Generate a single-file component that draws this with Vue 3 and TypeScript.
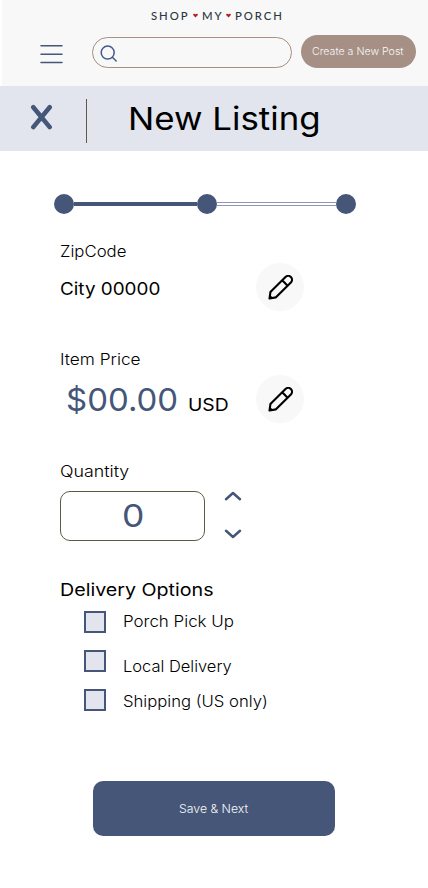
<script setup lang="ts">
import { ref } from 'vue'

interface DeliveryOption {
  id: string
  label: string
  checked: boolean
}

const quantity = ref(0)
const options = ref<DeliveryOption[]>([
  { id: 'porch', label: 'Porch Pick Up', checked: false },
  { id: 'local', label: 'Local Delivery', checked: false },
  { id: 'shipping', label: 'Shipping (US only)', checked: false },
])

function step(delta: number) {
  quantity.value = Math.max(0, quantity.value + delta)
}
</script>

<template>
  <div class="page">
    <header class="top">
      <div class="logo">
        <span class="w-shop">SHOP</span>
        <svg class="heart" viewBox="0 0 6 5"><path d="M3 4.8 L.4 2.2 C-.5 .8 1.3 -.6 3 .9 C4.7 -.6 6.5 .8 5.6 2.2Z" fill="#b3202a" /></svg>
        <span class="w-my">MY</span>
        <svg class="heart" viewBox="0 0 6 5"><path d="M3 4.8 L.4 2.2 C-.5 .8 1.3 -.6 3 .9 C4.7 -.6 6.5 .8 5.6 2.2Z" fill="#b3202a" /></svg>
        <span class="w-porch">PORCH</span>
      </div>
      <div class="bar">
        <svg class="menu" viewBox="0 0 23 20" fill="none" stroke="#455679" stroke-width="1.5" stroke-linecap="round"><path d="M1 1.8H22M1 10.2H22M1 18.5H22" /></svg>
        <div class="search">
          <svg viewBox="0 0 18 18" fill="none" stroke="#455a87" stroke-width="1.5" stroke-linecap="round"><circle cx="7.7" cy="7.6" r="6.5" /><path d="M12.3 12.2L16.2 16" /></svg>
        </div>
        <button class="create"><span class="t t-create">Create a New Post</span></button>
      </div>
    </header>

    <div class="title">
      <svg class="close" viewBox="0 0 22 26" fill="none" stroke="#455679" stroke-width="4.6" stroke-linecap="round"><path d="M3.3 3.2L19.7 23.1M19.7 3.2L3.3 23.1" /></svg>
      <i class="rule"></i>
      <h1 class="t t-title">New Listing</h1>
    </div>

    <main>
      <div class="stepper">
        <i class="dot"></i><i class="line done"></i><i class="dot"></i><i class="line todo"></i><i class="dot"></i>
      </div>

      <section class="zip">
        <div class="col">
          <span class="t label t-zip">ZipCode</span>
          <span class="t t-city">City 00000</span>
        </div>
        <button class="edit">
          <svg viewBox="0 0 26 26" fill="none" stroke="#000" stroke-width="2.2" stroke-linejoin="round"><path d="M1.6 24.4L2.5 17.8L18.2 2.1A3.95 3.95 0 0 1 23.8 7.7L8 23.3Z M14.8 5.5L20.4 11.1" /><path d="M1.6 24.4L2 21L4.8 23.8Z" fill="#000" stroke-width=".8" /></svg>
        </button>
      </section>

      <section class="price">
        <div class="col">
          <span class="t label t-item">Item Price</span>
          <div class="amount">
            <span class="t t-amount">$00.00</span>
            <span class="t t-usd">USD</span>
          </div>
        </div>
        <button class="edit">
          <svg viewBox="0 0 26 26" fill="none" stroke="#000" stroke-width="2.2" stroke-linejoin="round"><path d="M1.6 24.4L2.5 17.8L18.2 2.1A3.95 3.95 0 0 1 23.8 7.7L8 23.3Z M14.8 5.5L20.4 11.1" /><path d="M1.6 24.4L2 21L4.8 23.8Z" fill="#000" stroke-width=".8" /></svg>
        </button>
      </section>

      <section class="qty">
        <span class="t label t-qty">Quantity</span>
        <div class="qty-row">
          <div class="qty-box"><span class="t t-zero">{{ quantity }}</span></div>
          <div class="arrows">
            <button @click="step(1)"><svg viewBox="0 0 18 10" fill="none" stroke="#455679" stroke-width="2.5" stroke-linecap="round" stroke-linejoin="round"><path d="M2 8.2L9 2L16 8.2" /></svg></button>
            <button @click="step(-1)"><svg viewBox="0 0 18 10" fill="none" stroke="#455679" stroke-width="2.5" stroke-linecap="round" stroke-linejoin="round"><path d="M2 1.8L9 8L16 1.8" /></svg></button>
          </div>
        </div>
      </section>

      <section class="delivery">
        <h2 class="t t-delivery">Delivery Options</h2>
        <div v-for="o in options" :key="o.id" class="option" @click="o.checked = !o.checked">
          <i class="box" :class="{ on: o.checked }"></i>
          <span class="t opt" :class="'t-' + o.id">{{ o.label }}</span>
        </div>
      </section>

      <button class="save"><span class="t t-save">Save &amp; Next</span></button>
    </main>
  </div>
</template>

<style>
body { background: #fff; }
</style>

<style scoped>
* { box-sizing: border-box; }
.page { width: 428px; height: 888px; overflow: hidden; background: #fff; color: #000; font-family: Inter, "Open Sans", sans-serif; }
button { border: 0; padding: 0; margin: 0; background: none; font: inherit; color: inherit; }
h1, h2 { margin: 0; font-weight: inherit; }
svg { display: block; flex: none; }
.t { display: block; white-space: nowrap; width: max-content; flex: none; transform-origin: 0 50%; }

.top { margin-left: 2px; height: 86px; background: #f8f8f8; padding-top: 8px; }
.logo { height: 15px; display: flex; align-items: center; padding-left: 149px; font: 500 12.3px/15px Lato, sans-serif; color: #2b363d; }
.logo span { letter-spacing: 2.1px; flex: none; transform: scaleX(.92); transform-origin: 0 50%; }
.w-shop { width: 41.5px; }
.w-my { width: 24.5px; margin-left: 4px; }
.w-porch { margin-left: 4px; }
.heart { width: 5px; height: 5px; }
.bar { display: flex; align-items: flex-start; padding: 12px 0 0 38px; }
.menu { width: 23px; height: 20px; margin-top: 9px; }
.search { width: 200px; height: 31px; margin: 2px 0 0 29px; border: 1px solid #a68f84; border-radius: 16px; padding: 7px 0 0 7px; }
.search svg { width: 18px; height: 18px; }
.create { width: 115px; height: 33px; margin-left: 9px; border-radius: 17px; background: #a68f84; color: #f8f8f8; padding-left: 11px; }

.title { height: 65px; background: #e2e5ed; display: flex; align-items: flex-start; padding-left: 30px; }
.close { width: 22px; height: 26px; margin-top: 18px; }
.rule { width: 1px; height: 44px; margin: 13px 0 0 34px; background: #5b5a43; }
h1.t { margin: 13px 0 0 41px; line-height: 40px; }

main { padding: 43px 0 0 54px; }
.stepper { display: flex; align-items: center; height: 20px; width: 302px; }
.dot { width: 20px; height: 20px; border-radius: 50%; background: #455679; flex: none; }
.line { height: 4px; }
.done { width: 123px; background: #455679; }
.todo { width: 119px; border: solid #8c96b5; border-width: 1px 0; }

section { margin-left: 6px; display: flex; }
.col { width: 196px; flex: none; }
.label { line-height: 20px; }
.zip { padding-top: 28px; height: 136px; }
.t-city { margin-top: 17px; line-height: 20px; }
.edit { width: 48px; height: 48px; border-radius: 50%; background: #f8f8f8; flex: none; display: flex; align-items: center; justify-content: center; }
.edit svg { width: 25px; height: 25px; }
.zip .edit { margin-top: 21px; }
.price { height: 112px; }
.price .edit { margin-top: 25px; }
.amount { display: flex; padding: 10px 0 0 6px; height: 50px; }
.t-amount { width: 122px; line-height: 40px; color: #455679; }
.t-usd { line-height: 22px; margin-top: 14px; }
.qty { flex-direction: column; height: 117px; }
.qty-row { display: flex; margin-top: 9px; }
.qty-box { width: 145px; height: 50px; border: 1px solid #5b5a43; border-radius: 10px; padding-left: 61px; }
.t-zero { line-height: 48px; color: #455679; }
.arrows { margin-left: 19px; display: flex; flex-direction: column; gap: 28px; }
.arrows svg { width: 18px; height: 10px; }
.delivery { flex-direction: column; height: 202px; }
.t-delivery { line-height: 22px; margin-bottom: 10px; }
.option { display: flex; padding-left: 24px; height: 39px; }
.box { width: 22px; height: 22px; border: 2px solid #455679; background: #e2e5ed; flex: none; }
.box.on { background: #455679; }
.opt { line-height: 22px; margin-left: 17px; }
.save { width: 242px; height: 55px; margin-left: 39px; border-radius: 10px; background: #455679; color: #f8f8f8; padding-left: 86px; display: block; }

.t-create { font-size: 10.6px; font-weight: 300; }
.t-title { font-size: 31.7px; font-weight: 400; transform: scaleX(1.1); }
.label, .opt { font-size: 15.4px; font-weight: 350; }
.t-zip { transform: scaleX(1.09); }
.t-item { transform: scaleX(1.12); }
.t-qty { transform: scaleX(1.155); }
.t-porch { transform: scaleX(1.1); }
.t-local { transform: scaleX(1.07); margin-top: 6px; }
.t-shipping { transform: scaleX(1.083); margin-top: 2px; }
.t-city, .t-delivery, .t-usd { font-size: 17.4px; font-weight: 400; }
.t-city { transform: scaleX(1.085); }
.t-usd { transform: scaleX(1.11); }
.t-delivery { transform: scaleX(1.13); }
.t-amount, .t-zero { font-size: 31.7px; font-weight: 400; transform: scaleX(1.04); }
.t-zero { transform: scaleX(1.12); }
.t-save { font-size: 11.6px; font-weight: 300; transform: scaleX(1.06); }
</style>
